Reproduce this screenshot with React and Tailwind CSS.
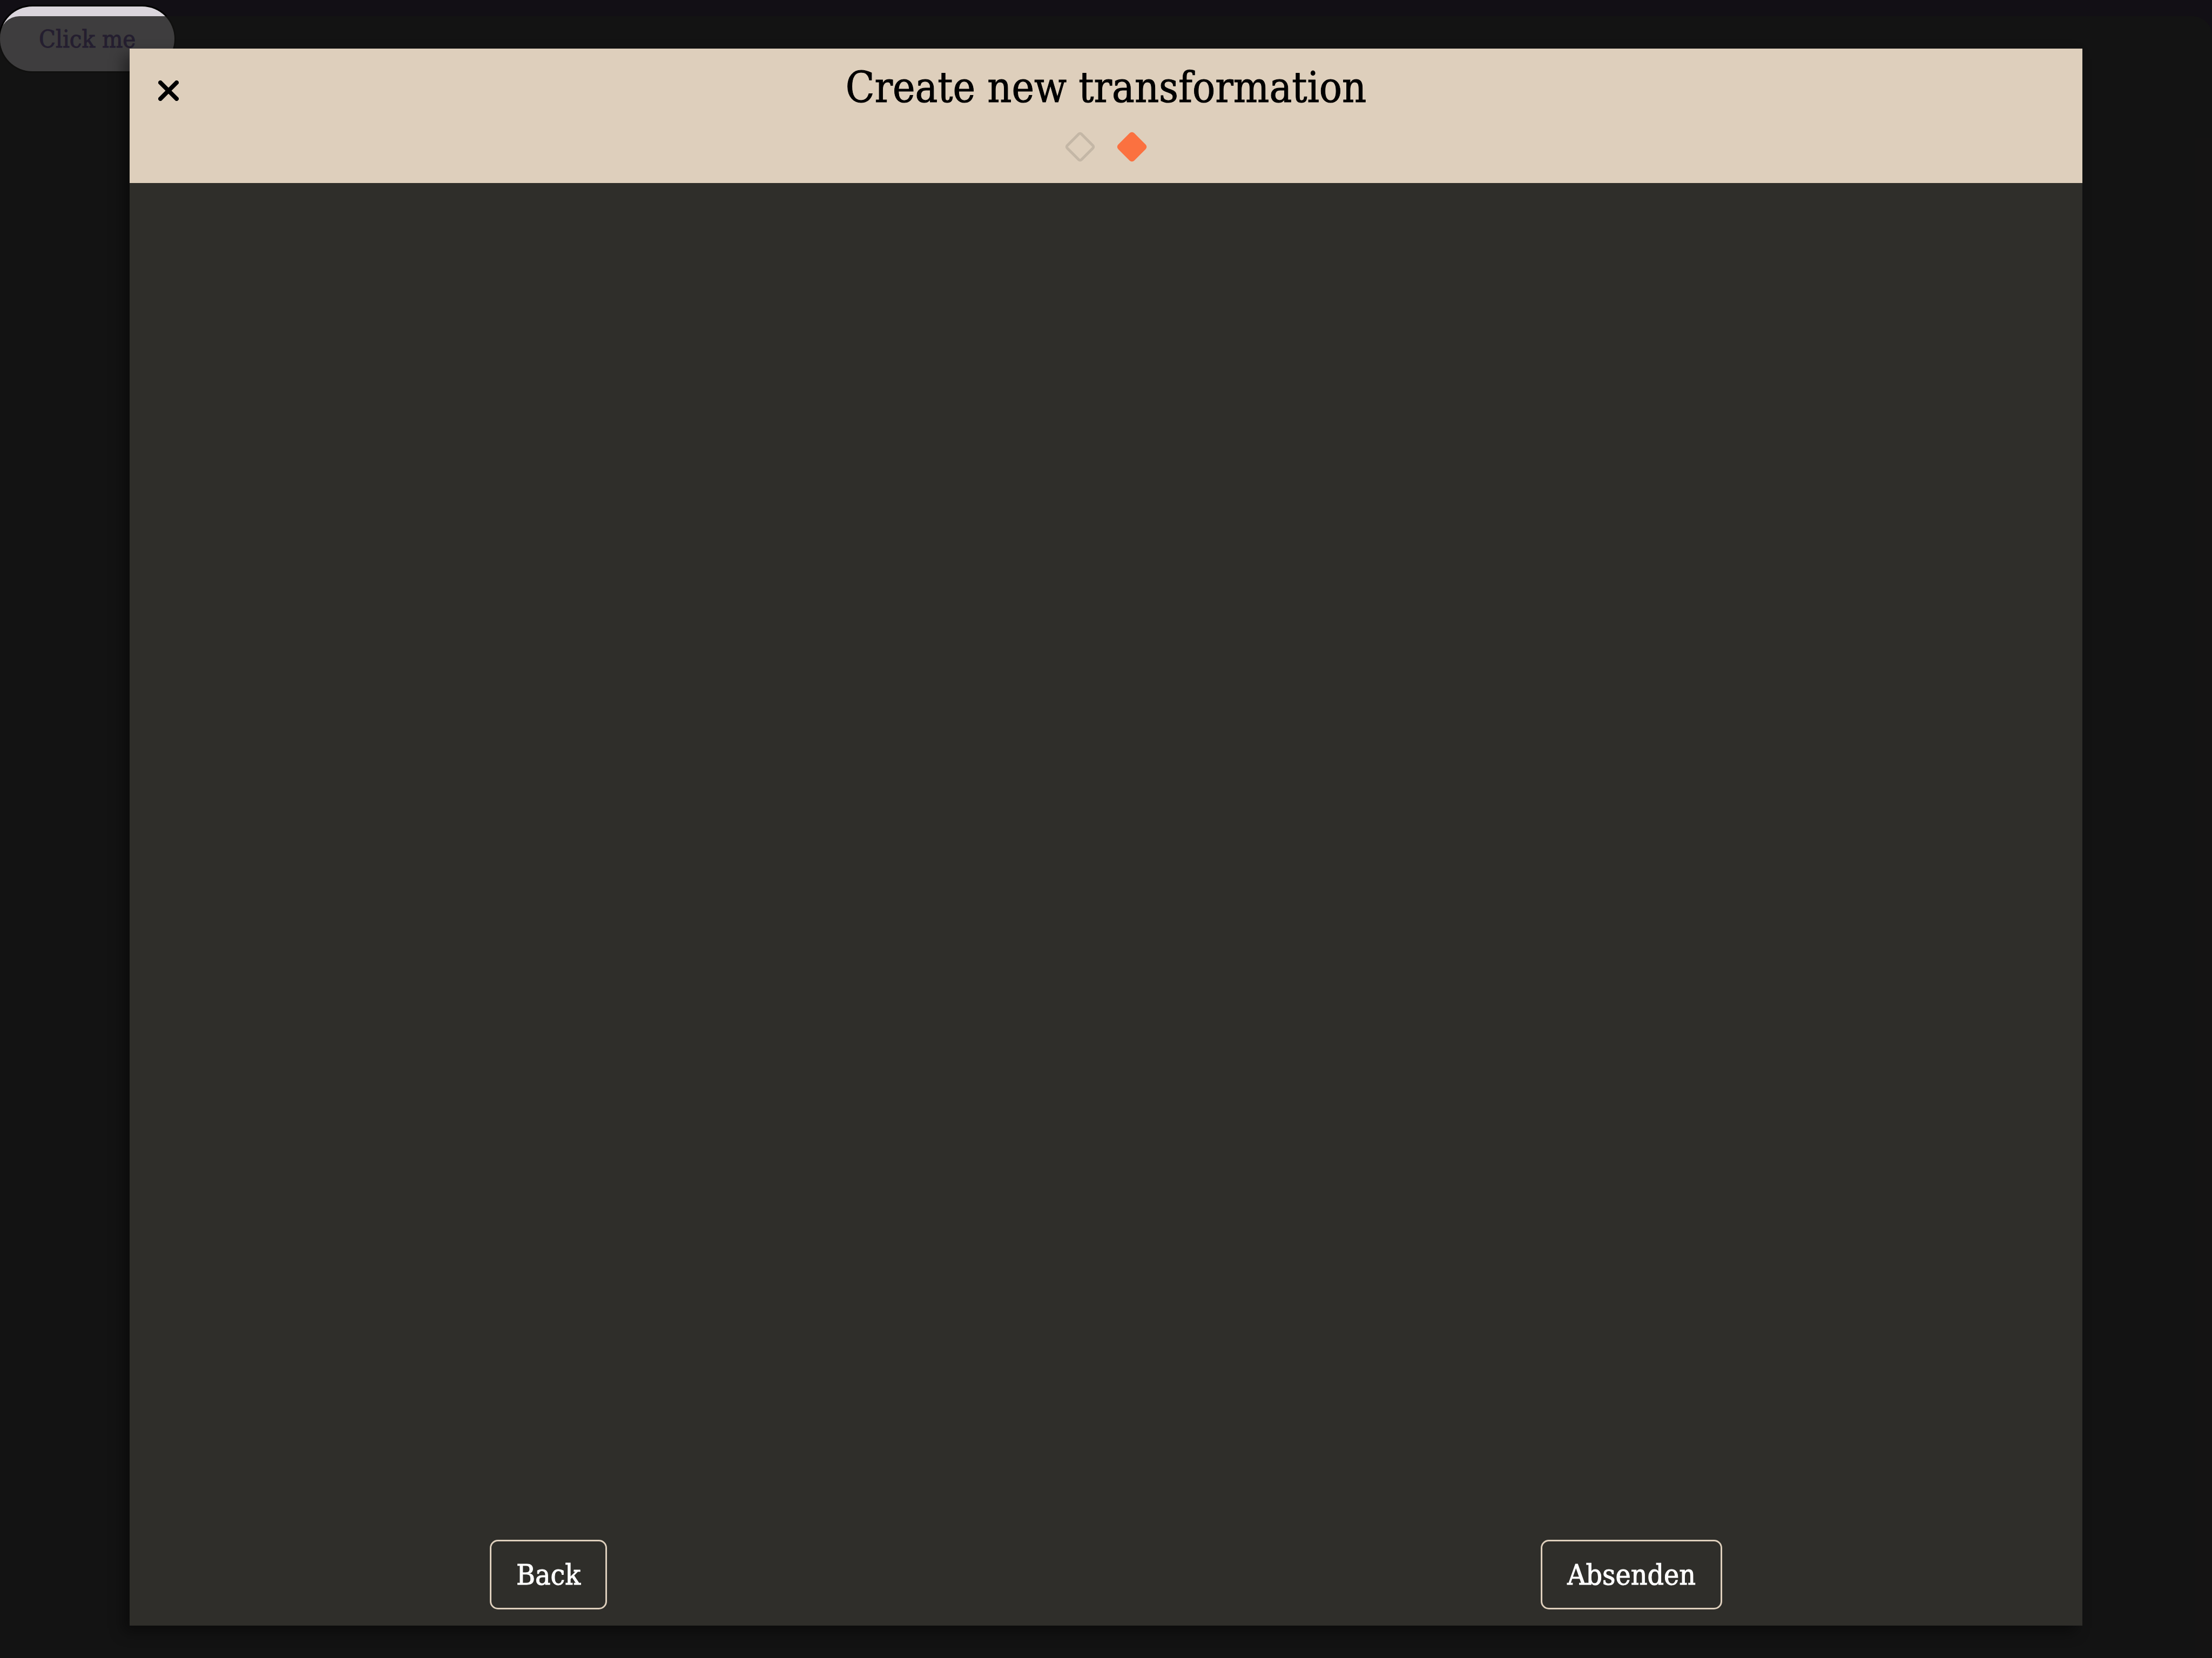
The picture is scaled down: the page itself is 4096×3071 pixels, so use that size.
import React from "react";

function CloseIcon() {
  return (
    <svg viewBox="0 0 38 38" className="size-[38px]" fill="none" stroke="#000" strokeWidth="8" strokeLinecap="round" aria-hidden="true">
      <path d="M4 4 34 34M34 4 4 34" />
    </svg>
  );
}

function Step({ active }) {
  return (
    <svg viewBox="0 0 54 54" className="size-[54px] overflow-visible" aria-hidden="true">
      {active ? (
        <rect x="6" y="6" width="42" height="42" rx="6" transform="rotate(45 27 27)" fill="#fb7140" />
      ) : (
        <rect x="8.5" y="8.5" width="37" height="37" rx="3.5" transform="rotate(45 27 27)" fill="none" stroke="#c4b7a6" strokeWidth="5" />
      )}
    </svg>
  );
}

function FooterButton({ children }) {
  return (
    <button className="h-[129px] rounded-[15px] border-3 border-[#decfbc] px-[46px] text-[53px] leading-none text-white [-webkit-text-stroke:1px]">
      {children}
    </button>
  );
}

export default function App() {
  return (
    <div className="relative h-screen overflow-hidden bg-[#120f15] pt-3 font-['DejaVu_Serif_Condensed','DejaVu_Serif',serif]">
      <button className="h-[120px] rounded-full bg-[#dad5dc] px-[72px] text-[45px] leading-none text-[#5f4499] shadow-[0_0_0_3px_#000] [-webkit-text-stroke:1px]">
        Click me
      </button>
      <div className="absolute inset-x-0 top-[30px] bottom-0 rounded-t-[36px] bg-[#141413]/79 px-60 pt-[60px] pb-[60px]">
        <div role="dialog" aria-labelledby="dialog-title" className="flex h-full flex-col bg-[#2f2e2a] shadow-[-12px_12px_24px_rgba(0,0,0,0.4)]">
          <header className="grid h-[249px] grid-cols-[1fr_auto_1fr] content-start bg-[#decfbc] pt-6">
            <button aria-label="Close" className="ml-[53px] mt-[35px] size-[38px]">
              <CloseIcon />
            </button>
            <h1 id="dialog-title" className="text-[78px] leading-[96px] text-black [-webkit-text-stroke:1px]">Create new transformation</h1>
            <div className="col-span-3 mt-[35px] flex justify-center gap-[42px]">
              <Step />
              <Step active />
            </div>
          </header>
          <main className="flex-1" />
          <footer className="flex justify-around gap-[395px] pb-[30px]">
            <FooterButton>Back</FooterButton>
            <FooterButton>Absenden</FooterButton>
          </footer>
        </div>
      </div>
    </div>
  );
}
